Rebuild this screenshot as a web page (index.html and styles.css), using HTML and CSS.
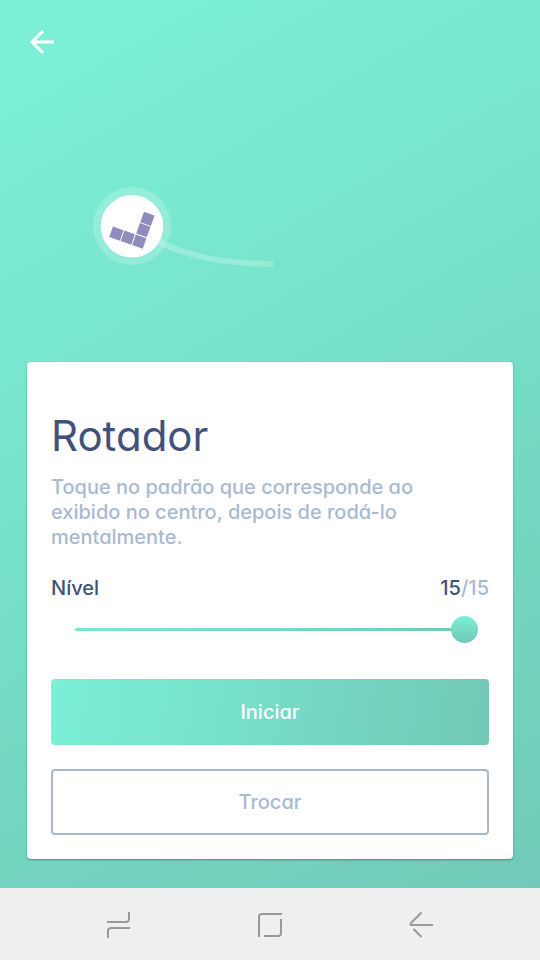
FILE: index.html
```html
<!DOCTYPE html>
<html lang="pt-BR">
<head>
  <meta charset="utf-8">
  <meta name="viewport" content="width=device-width, initial-scale=1">
  <title>Rotador</title>
  <link rel="stylesheet" href="styles.css">
</head>
<body>
  <main class="screen">
    <header class="topbar">
      <button class="icon-button" type="button" aria-label="Voltar">
        <svg width="24" height="24" viewBox="0 0 24 24" fill="none" stroke="currentColor" stroke-width="3">
          <path d="M24 12H2.500M13 1L2 12L13 23"/>
        </svg>
      </button>
    </header>

    <div class="journey">
      <svg width="180" height="80" viewBox="0 0 180 80" aria-hidden="true">
        <path d="M66 55Q110 77 180 77" fill="none" stroke="#fff" stroke-opacity=".23" stroke-width="6"/>
        <circle cx="39" cy="39" r="39" fill="#fff" fill-opacity=".2"/>
        <circle cx="39" cy="39.300" r="31.300" fill="#fff"/>
        <g fill="#8f8dbd" transform="translate(46.300 54.700) rotate(19.500)">
          <rect x="-5.600" y="-29.900" width="11.200" height="11.200"/>
          <rect x="-5.600" y="-17.800" width="11.200" height="11.200"/>
          <rect x="-5.600" y="-5.600" width="11.200" height="11.200"/>
          <rect x="-17.800" y="-5.600" width="11.200" height="11.200"/>
          <rect x="-29.900" y="-5.600" width="11.200" height="11.200"/>
        </g>
      </svg>
    </div>

    <section class="card">
      <h1 class="title">Rotador</h1>
      <p class="description">Toque no padrão que corresponde ao exibido no centro, depois de rodá-lo mentalmente.</p>
      <div class="level">
        <label class="level-label" for="level">Nível</label>
        <output class="level-value" for="level"><span class="level-current">15</span>/15</output>
      </div>
      <div class="slider-row">
        <input class="slider" id="level" type="range" min="1" max="15" value="15">
      </div>
      <button class="button button-primary" type="button">Iniciar</button>
      <button class="button button-outline" type="button">Trocar</button>
    </section>
  </main>

  <nav class="system-nav" aria-label="Sistema">
    <button class="icon-button" type="button" aria-label="Recentes">
      <svg width="26" height="28" viewBox="0 0 26 28" fill="none" stroke="currentColor" stroke-width="2">
        <path d="M1 12H20Q23 12 23 9V2M24 18H5Q2 18 2 21V28"/>
      </svg>
    </button>
    <button class="icon-button" type="button" aria-label="Início">
      <svg width="26" height="28" viewBox="0 0 26 28" fill="none" stroke="currentColor" stroke-width="2">
        <path d="M2 27V7Q2 4 5 4H25M24 9V23Q24 26 21 26H7"/>
      </svg>
    </button>
    <button class="icon-button" type="button" aria-label="Voltar">
      <svg width="26" height="28" viewBox="0 0 26 28" fill="none" stroke="currentColor" stroke-width="2">
        <path d="M25 15H3Q2 14.500 3 13L13.500 2.500M5.500 19L13.500 27"/>
      </svg>
    </button>
  </nav>
</body>
</html>
```
FILE: styles.css
```css
* {
  box-sizing: border-box;
}

body {
  display: flex;
  flex-direction: column;
  min-height: 100vh;
  margin: 0;
  font-family: Inter, "Open Sans", sans-serif;
  font-size: 20px;
  font-weight: 500;
  font-feature-settings: "cv11";
  line-height: 25px;
  color: #425179;
}

.screen {
  display: flex;
  flex: 1;
  flex-direction: column;
  padding: 30px 27px 29px;
  background: linear-gradient(150deg, #7bf0d6 8%, #76dcc5 55%, #71cab7);
}

.icon-button {
  display: flex;
  padding: 0;
  border: 0;
  background: none;
  color: inherit;
}

.topbar {
  display: flex;
  padding-left: 3px;
  color: #fff;
}

.journey {
  display: flex;
  flex: 1;
  align-items: center;
  padding: 38px 66px 0;
}

.card {
  display: flex;
  flex-direction: column;
  padding: 48px 24px 24px;
  border-radius: 4px;
  background: #fff;
  box-shadow: 0 1px 2px rgba(20, 80, 70, 0.5);
}

.title {
  margin: 0 0 13px;
  font-size: 42px;
  font-weight: 400;
  line-height: 52px;
}

.description {
  margin: 0 0 26px;
  padding-right: 48px;
  color: #a9b9d1;
}

.level {
  display: flex;
  justify-content: space-between;
}

.level-value {
  color: #a9b9d1;
}

.level-current {
  color: #425179;
}

.slider-row {
  display: flex;
  padding: 14px 11px 36px 24px;
}

.slider {
  flex: 1;
  height: 28px;
  margin: 0;
  appearance: none;
  background: none;
}

.slider::-webkit-slider-runnable-track {
  height: 3px;
  border-radius: 2px;
  background: linear-gradient(90deg, #7be6d0, #71c8b5);
}

.slider::-webkit-slider-thumb {
  width: 27px;
  height: 27px;
  margin-top: -12px;
  appearance: none;
  border-radius: 50%;
  background: linear-gradient(#7bf0d6, #71c8b5);
}

.button {
  height: 66px;
  border: 0;
  border-radius: 4px;
  font: inherit;
  font-feature-settings: inherit;
}

.button-primary {
  background: linear-gradient(98deg, #7bf0d6, #71c8b5);
  color: #fff;
}

.button-outline {
  margin-top: 24px;
  border: 2px solid #a9b7cb;
  background: #fff;
  color: #a9b9d1;
}

.system-nav {
  display: flex;
  align-items: center;
  justify-content: space-between;
  height: 72px;
  padding: 0 106px;
  background: #efefef;
  color: #999;
}
```
